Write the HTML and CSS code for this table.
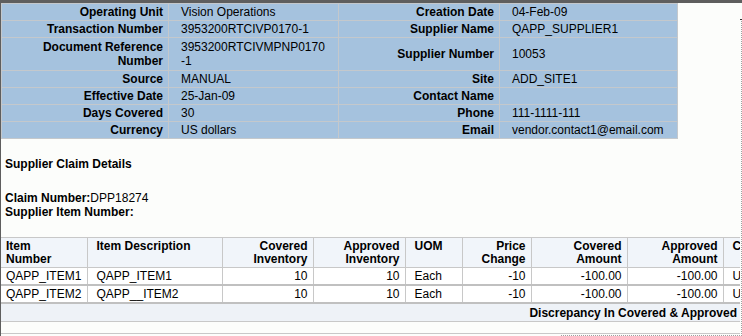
FILE: index.html
```html
<!DOCTYPE html>
<html>
<head>
<meta charset="utf-8">
<link rel="stylesheet" href="styles.css">
</head>
<body>
<div class="window">
  <div class="content">
    <table class="header-table">
      <colgroup>
        <col class="hc1"><col class="hc2"><col class="hc3"><col class="hc4">
      </colgroup>
      <tr>
        <th>Operating Unit</th><td>Vision Operations</td>
        <th>Creation Date</th><td>04-Feb-09</td>
      </tr>
      <tr>
        <th>Transaction Number</th><td>3953200RTCIVP0170-1</td>
        <th>Supplier Name</th><td>QAPP_SUPPLIER1</td>
      </tr>
      <tr class="tall">
        <th>Document Reference<br>Number</th><td>3953200RTCIVMPNP0170<br>-1</td>
        <th>Supplier Number</th><td>10053</td>
      </tr>
      <tr>
        <th>Source</th><td>MANUAL</td>
        <th>Site</th><td>ADD_SITE1</td>
      </tr>
      <tr>
        <th>Effective Date</th><td>25-Jan-09</td>
        <th>Contact Name</th><td></td>
      </tr>
      <tr>
        <th>Days Covered</th><td>30</td>
        <th>Phone</th><td>111-1111-111</td>
      </tr>
      <tr>
        <th>Currency</th><td>US dollars</td>
        <th>Email</th><td>vendor.contact1@email.com</td>
      </tr>
    </table>

    <div class="claim">
      <div class="claim-title">Supplier Claim Details</div>
      <div class="claim-info">
        <div><b>Claim Number:</b>DPP18274</div>
        <div><b>Supplier Item Number:</b></div>
      </div>
    </div>

    <table class="lines">
      <colgroup>
        <col class="c1"><col class="c2"><col class="c3"><col class="c4"><col class="c5">
        <col class="c6"><col class="c7"><col class="c8"><col class="c9">
      </colgroup>
      <thead>
        <tr>
          <th class="l">Item<br>Number</th>
          <th class="l">Item Description</th>
          <th class="r">Covered<br>Inventory</th>
          <th class="r">Approved<br>Inventory</th>
          <th class="l">UOM</th>
          <th class="r">Price<br>Change</th>
          <th class="r">Covered<br>Amount</th>
          <th class="r">Approved<br>Amount</th>
          <th class="l">Currency</th>
        </tr>
      </thead>
      <tbody>
        <tr class="data">
          <td class="first">QAPP_ITEM1</td><td>QAPP_ITEM1</td><td class="r">10</td><td class="r">10</td>
          <td>Each</td><td class="r">-10</td><td class="r">-100.00</td><td class="r">-100.00</td><td>USD</td>
        </tr>
        <tr class="data">
          <td class="first">QAPP_ITEM2</td><td>QAPP__ITEM2</td><td class="r">10</td><td class="r">10</td>
          <td>Each</td><td class="r">-10</td><td class="r">-100.00</td><td class="r">-100.00</td><td>USD</td>
        </tr>
        <tr class="total">
          <td colspan="9">Discrepancy In Covered &amp; Approved</td>
        </tr>
        <tr class="blank">
          <td colspan="9"></td>
        </tr>
      </tbody>
    </table>
  </div>
  <div class="vscroll"></div>
  <div class="hscroll"></div>
</div>
</body>
</html>
```

FILE: styles.css
```css
html, body {
  margin: 0;
  padding: 0;
  background: #fcfdfb;
}

body {
  width: 742px;
  height: 336px;
  overflow: hidden;
  font-family: "Liberation Sans", Arial, sans-serif;
  font-size: 12px;
  color: #000;
}

.window {
  position: relative;
  height: 333px;
  border-top: 3px solid #5e5e5e;
  border-left: 1px solid #5e5e5e;
  overflow: hidden;
}

.content {
  width: 739px;
  overflow: hidden;
}

/* ---------- header block ---------- */
.header-table {
  border-collapse: collapse;
  background: #a5c2de;
  width: 676px;
  table-layout: fixed;
}

.hc1 { width: 167px; }
.hc2 { width: 170px; }
.hc3 { width: 161px; }
.hc4 { width: 178px; }

.header-table th,
.header-table td {
  border: 1px solid #c4c8cc;
  line-height: 14px;
  padding: 1px 0;
  vertical-align: middle;
  white-space: nowrap;
}

.header-table th {
  text-align: right;
  font-weight: bold;
  padding-right: 5px;
}

.header-table td {
  text-align: left;
  padding-left: 12px;
}

.header-table tr.tall th,
.header-table tr.tall td {
  padding-top: 2px;
  padding-bottom: 2px;
}

/* ---------- claim text ---------- */
.claim {
  padding-left: 4px;
  line-height: 14px;
}

.claim-title {
  font-weight: bold;
  margin-top: 18px;
}

.claim-info {
  margin-top: 20px;
}

/* ---------- lines table ---------- */
.lines {
  margin-top: 18px;
  border-collapse: collapse;
  table-layout: fixed;
  width: 800px;
}

.c1 { width: 86px; }
.c2 { width: 135px; }
.c3 { width: 91px; }
.c4 { width: 92px; }
.c5 { width: 57px; }
.c6 { width: 69px; }
.c7 { width: 96px; }
.c8 { width: 96px; }
.c9 { width: 78px; }

.lines thead th {
  background: #f1f5fa;
  border: 1px solid #c8c8c8;
  border-left: none;
  font-weight: bold;
  line-height: 13px;
  padding: 2px 5px 1px 9px;
  vertical-align: top;
  white-space: nowrap;
}

.lines thead th:first-child {
  padding-left: 5px;
}

.lines .l { text-align: left; }
.lines .r { text-align: right; }

.lines tr.data td {
  background: #ffffff;
  border-right: 1px solid #c8c8c8;
  border-bottom: 2px solid #c0c0c0;
  line-height: 14px;
  padding: 1px 5px 1px 9px;
  white-space: nowrap;
}

.lines tr.data td.first {
  padding-left: 5px;
}

.lines tr.data td.r {
  padding-right: 5px;
}

.lines tr.total td {
  background: #eef2f7;
  border-bottom: 1px solid #c8c8c8;
  text-align: right;
  font-weight: bold;
  line-height: 14px;
  padding: 2px 64px 1px 5px;
}

.lines tr.blank td {
  height: 11px;
  padding: 0;
  background: #fcfdfb;
  border-bottom: 1px solid #c8c8c8;
}

/* ---------- frame scroll edges ---------- */
.vscroll {
  position: absolute;
  right: 0;
  top: 16px;
  bottom: 0;
  width: 0;
  border-right: 1px dotted #a0a0a0;
}

.vscroll::before {
  content: "";
  position: absolute;
  top: 0;
  right: -1px;
  width: 2px;
  height: 1px;
  background: #303030;
}

.hscroll {
  position: absolute;
  left: 560px;
  right: 0;
  bottom: 0;
  height: 0;
  border-bottom: 1px dotted #a0a0a0;
}
```
